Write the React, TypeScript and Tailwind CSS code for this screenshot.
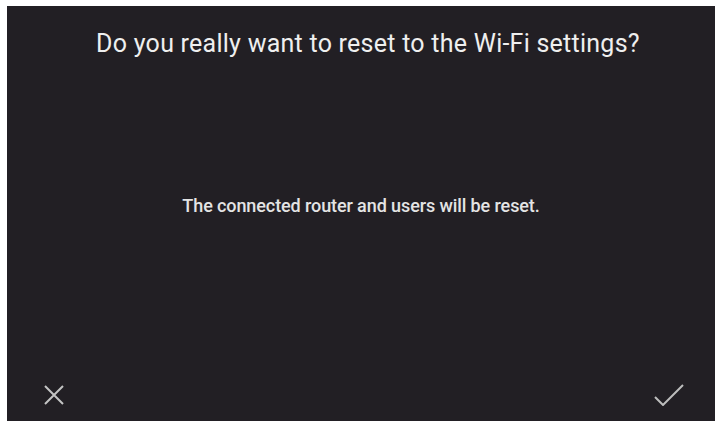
export default function App() {
  return (
    <div className="h-[423px] w-[715px] bg-white pl-[7px] pt-[6px] pb-[2px]">
      <div
        className="relative flex h-full w-full flex-col items-center bg-[#221f24] text-white"
        style={{ fontFamily: "Roboto, 'Liberation Sans', sans-serif" }}
      >
        <h1 className="mt-[24px] ml-[14px] text-[25px] leading-[28px] tracking-[0.25px] text-[#efefef]">
          Do you really want to reset to the Wi-Fi settings?
        </h1>
        <p className="mt-[137px] text-[18px] font-medium leading-[22px] tracking-[-0.1px] text-[#e4e4e4]">
          The connected router and users will be reset.
        </p>
        <div className="mt-auto flex w-full items-end justify-between pb-[15px] pl-[36px] pr-[31px]">
          <svg width="22" height="22" viewBox="0 0 22 22" fill="none" stroke="#c4c4c4" strokeWidth="2">
            <path d="M2 2 L20 20 M20 2 L2 20" />
          </svg>
          <svg width="30" height="22" viewBox="0 0 30 22" fill="none" stroke="#bdbdbd" strokeWidth="2">
            <path d="M1 13 L9 21 L29 1" />
          </svg>
        </div>
      </div>
    </div>
  );
}
